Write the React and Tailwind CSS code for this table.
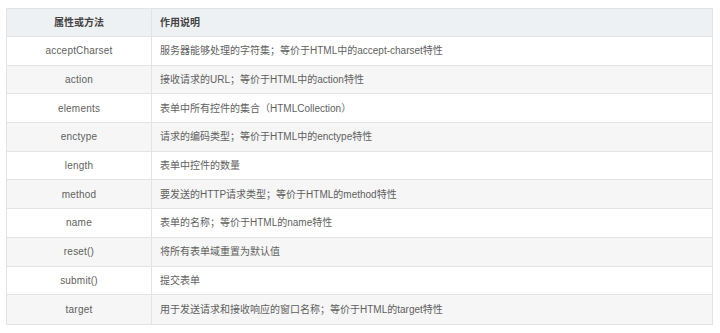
import React from "react";

const rows = [
  ["acceptCharset", "服务器能够处理的字符集；等价于HTML中的accept-charset特性"],
  ["action", "接收请求的URL；等价于HTML中的action特性"],
  ["elements", "表单中所有控件的集合（HTMLCollection）"],
  ["enctype", "请求的编码类型；等价于HTML中的enctype特性"],
  ["length", "表单中控件的数量"],
  ["method", "要发送的HTTP请求类型；等价于HTML的method特性"],
  ["name", "表单的名称；等价于HTML的name特性"],
  ["reset()", "将所有表单域重置为默认值"],
  ["submit()", "提交表单"],
  ["target", "用于发送请求和接收响应的窗口名称；等价于HTML的target特性"],
];

export default function App() {
  return (
    <div
      className="w-[720px] h-[333px] bg-white pt-[8px] pl-[6px]"
      style={{ fontFamily: '"Liberation Sans", "Noto Sans CJK SC", sans-serif' }}
    >
      <div className="w-[707px] border border-[#e3e3e3] text-[10px]">
        <div className="flex h-[28px] bg-[#eef1f4] border-b border-[#e3e3e3] text-[#444] font-semibold">
          <div className="w-[145px] flex items-center justify-center border-r border-[#e3e3e3]">属性或方法</div>
          <div className="flex-1 flex items-center pl-[8px]">作用说明</div>
        </div>
        {rows.map(([a, b], i) => (
          <div
            key={a}
            className={`flex h-[28.7px] text-[#5f5f5f] ${i % 2 === 1 ? "bg-[#f6f6f6]" : "bg-white"} ${i < rows.length - 1 ? "border-b border-[#e3e3e3]" : ""}`}
          >
            <div className="w-[145px] flex items-center justify-center border-r border-[#e3e3e3] tracking-[0.2px]">{a}</div>
            <div className="flex-1 flex items-center pl-[8px]">{b}</div>
          </div>
        ))}
      </div>
    </div>
  );
}
